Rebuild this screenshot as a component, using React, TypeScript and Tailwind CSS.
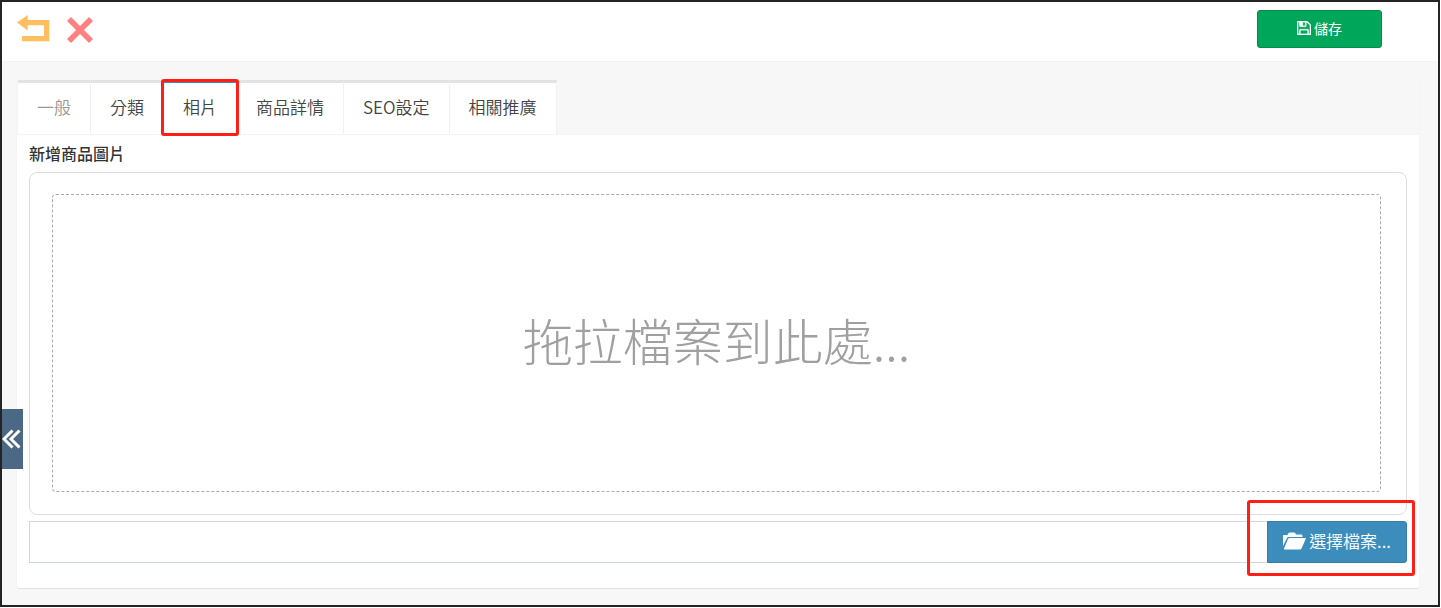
import { useRef, useState } from "react";

const tabs = ["一般", "分類", "相片", "商品詳情", "SEO設定", "相關推廣"];

function BackIcon() {
  return (
    <svg width="33" height="28" viewBox="0 0 33 28" fill="#ffbf60" aria-hidden="true">
      <path d="M0 7.5L10.7 0V5H32.3V26.3H5V21H27V10.3H10.7V15.5Z" />
    </svg>
  );
}

function CloseIcon() {
  return (
    <svg width="26" height="28" viewBox="0 -2 26 28" fill="none" stroke="#ff8080" strokeWidth="5.6" aria-hidden="true">
      <path d="M2 2L24 24M24 2L2 24" />
    </svg>
  );
}

function SaveIcon() {
  return (
    <svg width="14" height="14" viewBox="0 128 1536 1536" fill="currentColor" stroke="currentColor" strokeWidth="30" aria-hidden="true">
      <path d="M384 1536h768v-384h-768v384zm896 0h128v-896q0-14-10-38.5t-20-34.5l-281-281q-10-10-34-20t-39-10v416q0 40-28 68t-68 28h-576q-40 0-68-28t-28-68v-416h-128v1280h128v-416q0-40 28-68t68-28h832q40 0 68 28t28 68v416zm-384-928v-320q0-13-9.5-22.5t-22.5-9.5h-192q-13 0-22.5 9.5t-9.5 22.5v320q0 13 9.5 22.5t22.5 9.5h192q13 0 22.5-9.5t9.5-22.5zm640 32v928q0 40-28 68t-68 28h-1344q-40 0-68-28t-28-68v-1344q0-40 28-68t68-28h928q40 0 88 20t76 48l280 280q28 28 48 76t20 88z" />
    </svg>
  );
}

function FolderIcon() {
  return (
    <svg width="23" height="18" viewBox="0 0 23 18" fill="currentColor" aria-hidden="true">
      <path d="M0 14V3H4.5L5.5 1Q6 .5 7 .5H11Q12 .5 12.5 1.5L13 2.5H18.5Q19.5 2.5 19.5 4V5H5.5Q4.5 5 4 6Z" />
      <path d="M6.5 6H22.5Q23 6 22.7 7L18.5 16.5Q18 17.5 17 17.5H1.5Q.7 17.5 1 16.5L5 7Q5.5 6 6.5 6Z" />
    </svg>
  );
}

export default function App() {
  const [activeTab, setActiveTab] = useState("相片");
  const [fileName, setFileName] = useState("");
  const fileInput = useRef<HTMLInputElement>(null);

  return (
    <div className="relative mr-px border-2 border-[#242424] bg-[#f7f7f7] pb-[17px] font-['Noto_Sans_CJK_TC',sans-serif] text-[#333]">
      {/* Toolbar */}
      <header className="flex h-[60px] items-center justify-between border-b border-[#f1f1f1] bg-white pr-14 pb-[5px] pl-[15px]">
        <div className="flex items-center gap-[17px]">
          <button type="button" aria-label="返回">
            <BackIcon />
          </button>
          <button type="button" aria-label="關閉">
            <CloseIcon />
          </button>
        </div>
        <button
          type="button"
          className="flex h-[38px] w-[125px] items-center justify-center gap-[3px] rounded-[3px] border border-[#008d4c] bg-[#00a65a] pb-[2px] text-sm text-white"
        >
          <SaveIcon />
          儲存
        </button>
      </header>

      {/* Tab panel */}
      <main className="mt-[18px] mr-[19px] ml-[15px] rounded-[3px] shadow-[0_1px_1px_rgba(0,0,0,0.1)]">
        <div className="flex border-b border-l border-[#f4f4f4]" role="tablist">
          {tabs.map((tab) => (
            <button
              key={tab}
              type="button"
              role="tab"
              aria-selected={tab === activeTab}
              onClick={() => setActiveTab(tab)}
              className={`relative h-[54px] border-t-3 border-r border-r-[#f1f1f1] border-t-[#e3e3e3] bg-white px-[19px] pb-[3px] text-[17px] font-[350] ${
                tab === "一般" ? "text-[#999]" : "text-[#444]"
              }`}
            >
              {tab}
              {/* Highlight frame */}
              {tab === activeTab && (
                <span className="absolute -inset-x-[3px] -top-[4px] -bottom-[2px] z-10 rounded-[3px] border-3 border-[#ff1f14] shadow-[inset_0_1px_0_#3c8dbc]" />
              )}
            </button>
          ))}
        </div>

        <div className="rounded-b-[3px] bg-white px-3 pt-[7px] pb-[25px]">
          <label htmlFor="file-name" className="block text-base leading-[22px] font-medium">
            新增商品圖片
          </label>

          {/* Drop zone */}
          <div className="mt-2 rounded-lg border border-[#ddd] pt-[21px] pr-[25px] pb-[22px] pl-[22px]">
            <div className="flex h-[298px] items-center justify-center rounded border border-dashed border-[#aaa] pb-2 text-[50px] font-light text-[#a0a0a0]">
              拖拉檔案到此處...
            </div>
          </div>

          <div className="mt-[6px] flex h-[42px]">
            <input
              id="file-name"
              type="text"
              readOnly
              value={fileName}
              className="min-w-0 flex-1 border border-r-0 border-[#d2d6de] bg-white px-3 text-[17px]"
            />
            <input
              ref={fileInput}
              type="file"
              aria-label="選擇檔案"
              className="hidden"
              onChange={(e) => setFileName(e.target.files?.[0]?.name ?? "")}
            />
            <div className="relative">
              <button
                type="button"
                onClick={() => fileInput.current?.click()}
                className="flex h-full w-[140px] items-center justify-center gap-[3px] rounded-r-[3px] border border-[#367fa9] bg-[#3c8dbc] pb-[3px] text-[17px] font-[350] text-white"
              >
                <FolderIcon />
                選擇檔案...
              </button>
              {/* Highlight frame */}
              <span className="pointer-events-none absolute -top-[21px] -right-2 -bottom-[13px] -left-5 rounded-[3px] border-3 border-[#ff1f14]" />
            </div>
          </div>
        </div>
      </main>

      {/* Side menu toggle */}
      <button
        type="button"
        aria-label="展開選單"
        className="absolute top-[407px] left-0 flex h-[60px] w-[21px] items-center bg-[#4b6984] text-white"
      >
        <svg width="19" height="20" viewBox="0 0 19 20" fill="none" stroke="currentColor" strokeWidth="3" aria-hidden="true">
          <path d="M10.5 1.5L2 10L10.5 18.5M17.5 1.5L9 10L17.5 18.5" />
        </svg>
      </button>
    </div>
  );
}
